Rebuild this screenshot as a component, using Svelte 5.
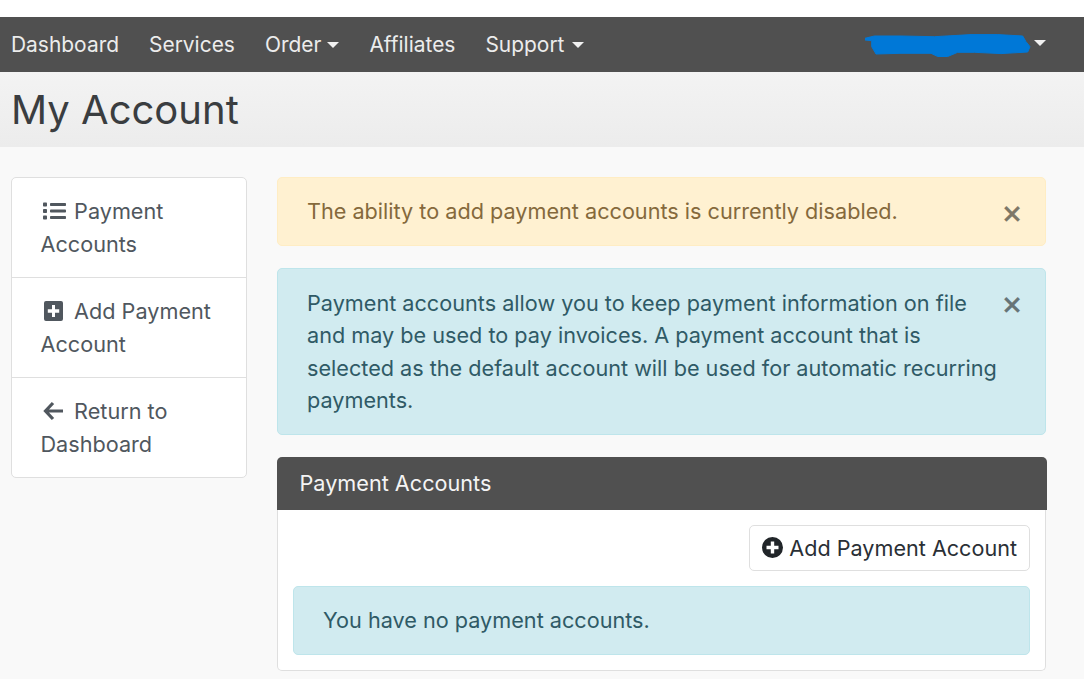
<script lang="ts">
	const navLinks = [
		{ label: "Dashboard", caret: false },
		{ label: "Services", caret: false },
		{ label: "Order", caret: true },
		{ label: "Affiliates", caret: false },
		{ label: "Support", caret: true }
	];
</script>

<div class="page">
	<nav class="topnav">
		<ul class="links">
			{#each navLinks as link}
				<li class:caret={link.caret}>{link.label}</li>
			{/each}
		</ul>
		<div class="user caret">
			<svg class="scribble" width="166" height="24" viewBox="0 0 166 24" aria-hidden="true">
				<path d="M0 4.3 L9.3 2 L36 2 L69.3 2.7 L106 .6 L132.7 .6 L157.7 2 L161 7.7 L165 12.7 L162.7 18 L136 19.6 L109.3 18.3 L92.7 18.3 L82.7 22.5 L72.7 22.5 L66 19.3 L36 19.3 L11 20 L6.7 12.7 L6.7 6.7 L0 6 Z" fill="#0078d7" stroke="#0078d7" stroke-linejoin="round" />
			</svg>
		</div>
	</nav>

	<header class="pagehead">
		<h1>My Account</h1>
	</header>

	<div class="content">
		<aside class="sidemenu">
			<div class="sideitem">
				<svg class="ico" width="23" height="20" viewBox="0 0 23 20" aria-hidden="true">
					<rect x="0" y="1.5" width="4" height="4" rx="0.8" />
					<rect x="0" y="8" width="4" height="4" rx="0.8" />
					<rect x="0" y="14.5" width="4" height="4" rx="0.8" />
					<rect x="7" y="2" width="16" height="3" rx="0.8" />
					<rect x="7" y="8.5" width="16" height="3" rx="0.8" />
					<rect x="7" y="15" width="16" height="3" rx="0.8" />
				</svg>
				Payment Accounts
			</div>
			<div class="sideitem">
				<svg class="ico" width="23" height="20" viewBox="0 0 23 20" aria-hidden="true">
					<path fill-rule="evenodd" d="M3 0 H18 a2 2 0 0 1 2 2 V18 a2 2 0 0 1 -2 2 H3 a2 2 0 0 1 -2 -2 V2 a2 2 0 0 1 2 -2 Z M9 4 V8.2 H4.8 V11.8 H9 V16 H12 V11.8 H16.2 V8.2 H12 V4 Z" />
				</svg>
				Add Payment Account
			</div>
			<div class="sideitem">
				<svg class="ico" width="23" height="20" viewBox="0 0 23 20" aria-hidden="true">
					<path d="M10 2 L2.5 10 L10 18 M3 10 H20" fill="none" stroke="currentColor" stroke-width="3.2" />
				</svg>
				Return to Dashboard
			</div>
		</aside>

		<main class="maincol">
			<div class="alert warning">
				<span>The ability to add payment accounts is currently disabled.</span>
				<span class="close">×</span>
			</div>
			<div class="alert info tall">
				<span>Payment accounts allow you to keep payment information on file and may be used to pay invoices. A payment account that is selected as the default account will be used for automatic recurring payments.</span>
				<span class="close">×</span>
			</div>
			<section class="panel">
				<div class="panelhead">Payment Accounts</div>
				<div class="panelbody">
					<div class="actions">
						<button class="addbtn">
							<svg width="21" height="21" viewBox="0 0 21 21" aria-hidden="true">
								<path fill-rule="evenodd" d="M10.5 0 a10.5 10.5 0 1 1 0 21 a10.5 10.5 0 1 1 0 -21 Z M8.8 4.5 V8.8 H4.5 V12.2 H8.8 V16.5 H12.2 V12.2 H16.5 V8.8 H12.2 V4.5 Z" fill="#212529" />
							</svg>
							<span class="btnlabel">Add Payment Account</span>
						</button>
					</div>
					<div class="alert info inner">You have no payment accounts.</div>
				</div>
			</section>
		</main>
	</div>
</div>

<style>
	:global(body) {
		background: #f9f9f9;
		font-family: Inter, "Liberation Sans", sans-serif;
		font-size: 21.65px;
		line-height: 32.5px;
		color: #50575e;
	}

	.page {
		padding-top: 17px;
		height: 662px;
		overflow: hidden;
	}

	.page::before {
		content: "";
		position: absolute;
		top: 0;
		left: 0;
		right: 0;
		height: 17px;
		background: #fff;
	}

	.topnav {
		display: flex;
		justify-content: space-between;
		align-items: center;
		height: 55px;
		padding: 0 38px 0 11px;
		background: #505050;
		color: #ececec;
		font-size: 20.95px;
	}

	.links {
		display: flex;
		gap: 30px;
		margin: 0;
		padding: 2px 0 0;
		list-style: none;
	}

	.caret::after {
		content: "";
		display: inline-block;
		margin-left: 6px;
		vertical-align: 4px;
		border-top: 6.5px solid #f1f1f1;
		border-left: 6.5px solid transparent;
		border-right: 6.5px solid transparent;
	}

	.links li:last-child::after {
		margin-left: 8px;
	}

	.user {
		display: flex;
		align-items: center;
		height: 24px;
	}

	.user::after {
		margin-left: 3px;
		margin-top: -3px;
		vertical-align: 0;
	}

	.scribble {
		display: block;
		margin-top: 3px;
	}

	.pagehead {
		height: 75px;
		padding: 0 11px;
		background: linear-gradient(#f3f3f3, #ececec);
		color: #3a3d40;
	}

	h1 {
		margin: 0;
		padding-top: 12px;
		font-size: 40px;
		font-weight: 400;
		line-height: 52px;
	}

	.content {
		display: grid;
		grid-template-columns: 236px 769px;
		gap: 30px;
		padding: 30px 38px 0 11px;
		align-items: start;
	}

	.sidemenu {
		background: #fff;
		border: 1px solid #dfdfdf;
		border-radius: 5px;
	}

	.sideitem {
		padding: 17px 20px 0 28.5px;
		height: 100px;
		box-sizing: border-box;
		border-bottom: 1px solid #dfdfdf;
	}

	.sideitem:last-child {
		border-bottom: none;
		height: 99px;
	}

	.ico {
		fill: currentColor;
		vertical-align: -2px;
		margin: 0 2px 0 2.5px;
	}

	.maincol {
		display: flex;
		flex-direction: column;
		gap: 22px;
	}

	.alert {
		position: relative;
		padding: 17.25px 45px 17.25px 29px;
		border: 1px solid;
		border-radius: 5px;
	}

	.tall {
		padding-top: 17.75px;
		padding-bottom: 16.75px;
	}

	.warning {
		background: #fff1d1;
		border-color: #ffedc4;
		color: #85693c;
	}

	.info {
		background: #d1ebf0;
		border-color: #bee5eb;
		color: #2f5a66;
	}

	.close {
		position: absolute;
		top: 17px;
		right: 22px;
		font-size: 33px;
		font-weight: 500;
		color: #000;
		opacity: 0.5;
	}

	.panel {
		background: #fff;
		border: 1px solid #dfdfdf;
		border-top: none;
		border-radius: 5px;
	}

	.panelhead {
		margin: 0 -2px 0 -1px;
		padding: 10px 22.5px;
		height: 53px;
		box-sizing: border-box;
		background: #505050;
		color: #f4f4f4;
		border-radius: 5px 5px 0 0;
	}

	.panelbody {
		padding: 15px;
	}

	.actions {
		display: flex;
		justify-content: flex-end;
		margin-bottom: 15px;
	}

	.addbtn {
		display: flex;
		align-items: center;
		gap: 6px;
		height: 46px;
		padding: 0 12px;
		font: inherit;
		font-size: 21.6px;
		color: #2a2f35;
		background: #fff;
		border: 1px solid #dfdfdf;
		border-radius: 5px;
	}

	.btnlabel {
		padding-top: 2px;
	}

	.inner {
		padding-right: 29px;
	}
</style>
